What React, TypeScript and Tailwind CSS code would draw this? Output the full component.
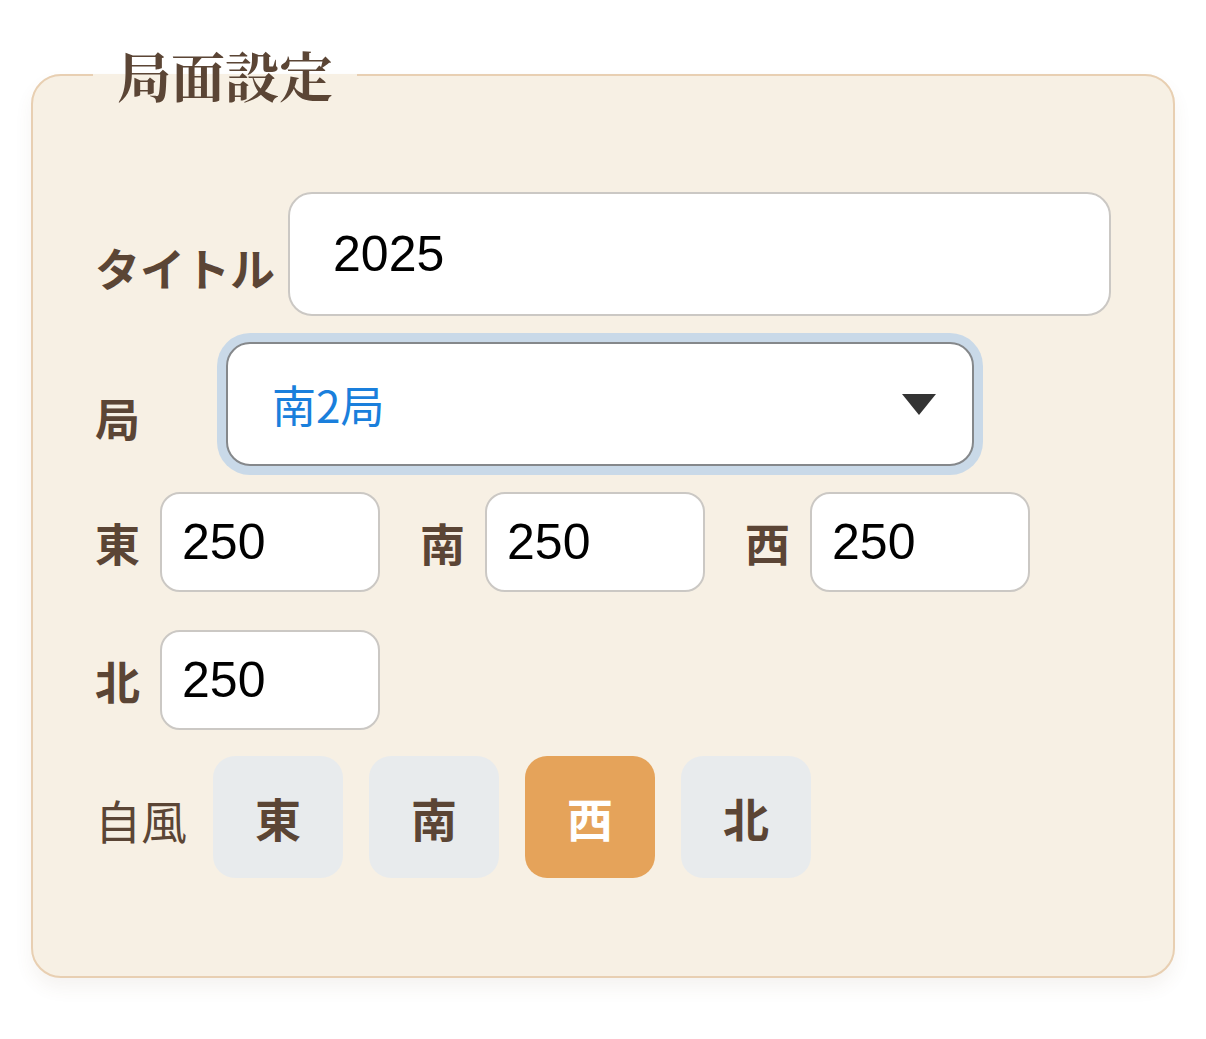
import { useState } from "react";

const winds = ["東", "南", "西", "北"];

const labelCls =
  "shrink-0 whitespace-nowrap text-[45px] font-bold text-[#5b4535] font-['Noto_Sans_CJK_JP',sans-serif] leading-none";

const scoreInputCls =
  "w-[220px] h-[100px] rounded-[20px] border-[2.5px] border-[#cbc8c4] bg-white pl-[20px] text-[50px] text-black font-['Liberation_Sans',sans-serif] outline-none";

export default function App() {
  const [title, setTitle] = useState("2025");
  const [round, setRound] = useState("南2局");
  const [scores, setScores] = useState(["250", "250", "250", "250"]);
  const [seat, setSeat] = useState(2);

  return (
    <div className="min-h-screen bg-white pt-[48px] px-[31px] font-['Noto_Sans_CJK_JP',sans-serif]">
      <fieldset className="w-[1144px] min-w-0 rounded-[30px] border-2 border-[#e8cfb2] bg-[#f7f0e4] pl-[62px] pr-[61px] pt-[90px] pb-[98px] shadow-[0_10px_18px_rgba(120,90,50,0.07)]">
        <legend className="-ml-[2px] px-[24px] text-[54px] leading-none font-bold text-[#5b4535] font-['Noto_Serif_CJK_JP','Noto_Sans_CJK_JP',serif]">
          局面設定
        </legend>

        <div className="flex flex-col gap-[26px]">
          {/* title */}
          <div className="flex items-center gap-[13px]">
            <label className={labelCls + " pt-[26px]"}>タイトル</label>
            <input
              value={title}
              onChange={(e) => setTitle(e.target.value)}
              className="w-[823px] h-[124px] shrink-0 rounded-[24px] border-[2.5px] border-[#cbc8c4] bg-white pl-[43px] text-[50px] text-black font-['Liberation_Sans',sans-serif] outline-none"
            />
          </div>

          {/* round */}
          <div className="flex items-center">
            <label className={labelCls + " pt-[26px] w-[131px]"}>局</label>
            <div className="relative">
              <select
                value={round}
                onChange={(e) => setRound(e.target.value)}
                className="appearance-none w-[748px] h-[124px] rounded-[24px] border-[2.5px] border-[#85888b] bg-white pl-[44px] text-[44px] text-[#1a7fdc] outline-none ring-[9px] ring-[#c9d9e8] font-['Noto_Sans_CJK_JP',sans-serif]"
              >
                <option>東1局</option>
                <option>東2局</option>
                <option>東3局</option>
                <option>東4局</option>
                <option>南1局</option>
                <option>南2局</option>
                <option>南3局</option>
                <option>南4局</option>
              </select>
              <svg
                className="pointer-events-none absolute right-[38px] top-[52px]"
                width="34"
                height="21"
                viewBox="0 0 34 21"
              >
                <polygon points="0,0 34,0 17,21" fill="#333333" />
              </svg>
            </div>
          </div>

          {/* scores */}
          <div className="flex flex-wrap gap-x-[40px] gap-y-[38px]">
            {winds.map((w, i) => (
              <div key={w} className="flex items-center gap-[20px]">
                <label className={labelCls}>{w}</label>
                <input
                  value={scores[i]}
                  onChange={(e) => {
                    const next = [...scores];
                    next[i] = e.target.value;
                    setScores(next);
                  }}
                  className={scoreInputCls}
                />
              </div>
            ))}
          </div>

          {/* seat wind */}
          <div className="flex items-center gap-[26px]">
            <span className="text-[46px] leading-none text-[#5b4535] pt-[4px]">自風</span>
            <div className="flex gap-[26px]">
              {winds.map((w, i) => (
                <button
                  key={w}
                  onClick={() => setSeat(i)}
                  className={
                    i === seat
                      ? "w-[130px] h-[122px] rounded-[22px] bg-[#e5a35a] text-white text-[46px] font-bold leading-none"
                      : "w-[130px] h-[122px] rounded-[22px] bg-[#e8ebed] text-[#5b4535] text-[46px] font-bold leading-none"
                  }
                >
                  {w}
                </button>
              ))}
            </div>
          </div>
        </div>
      </fieldset>
    </div>
  );
}
